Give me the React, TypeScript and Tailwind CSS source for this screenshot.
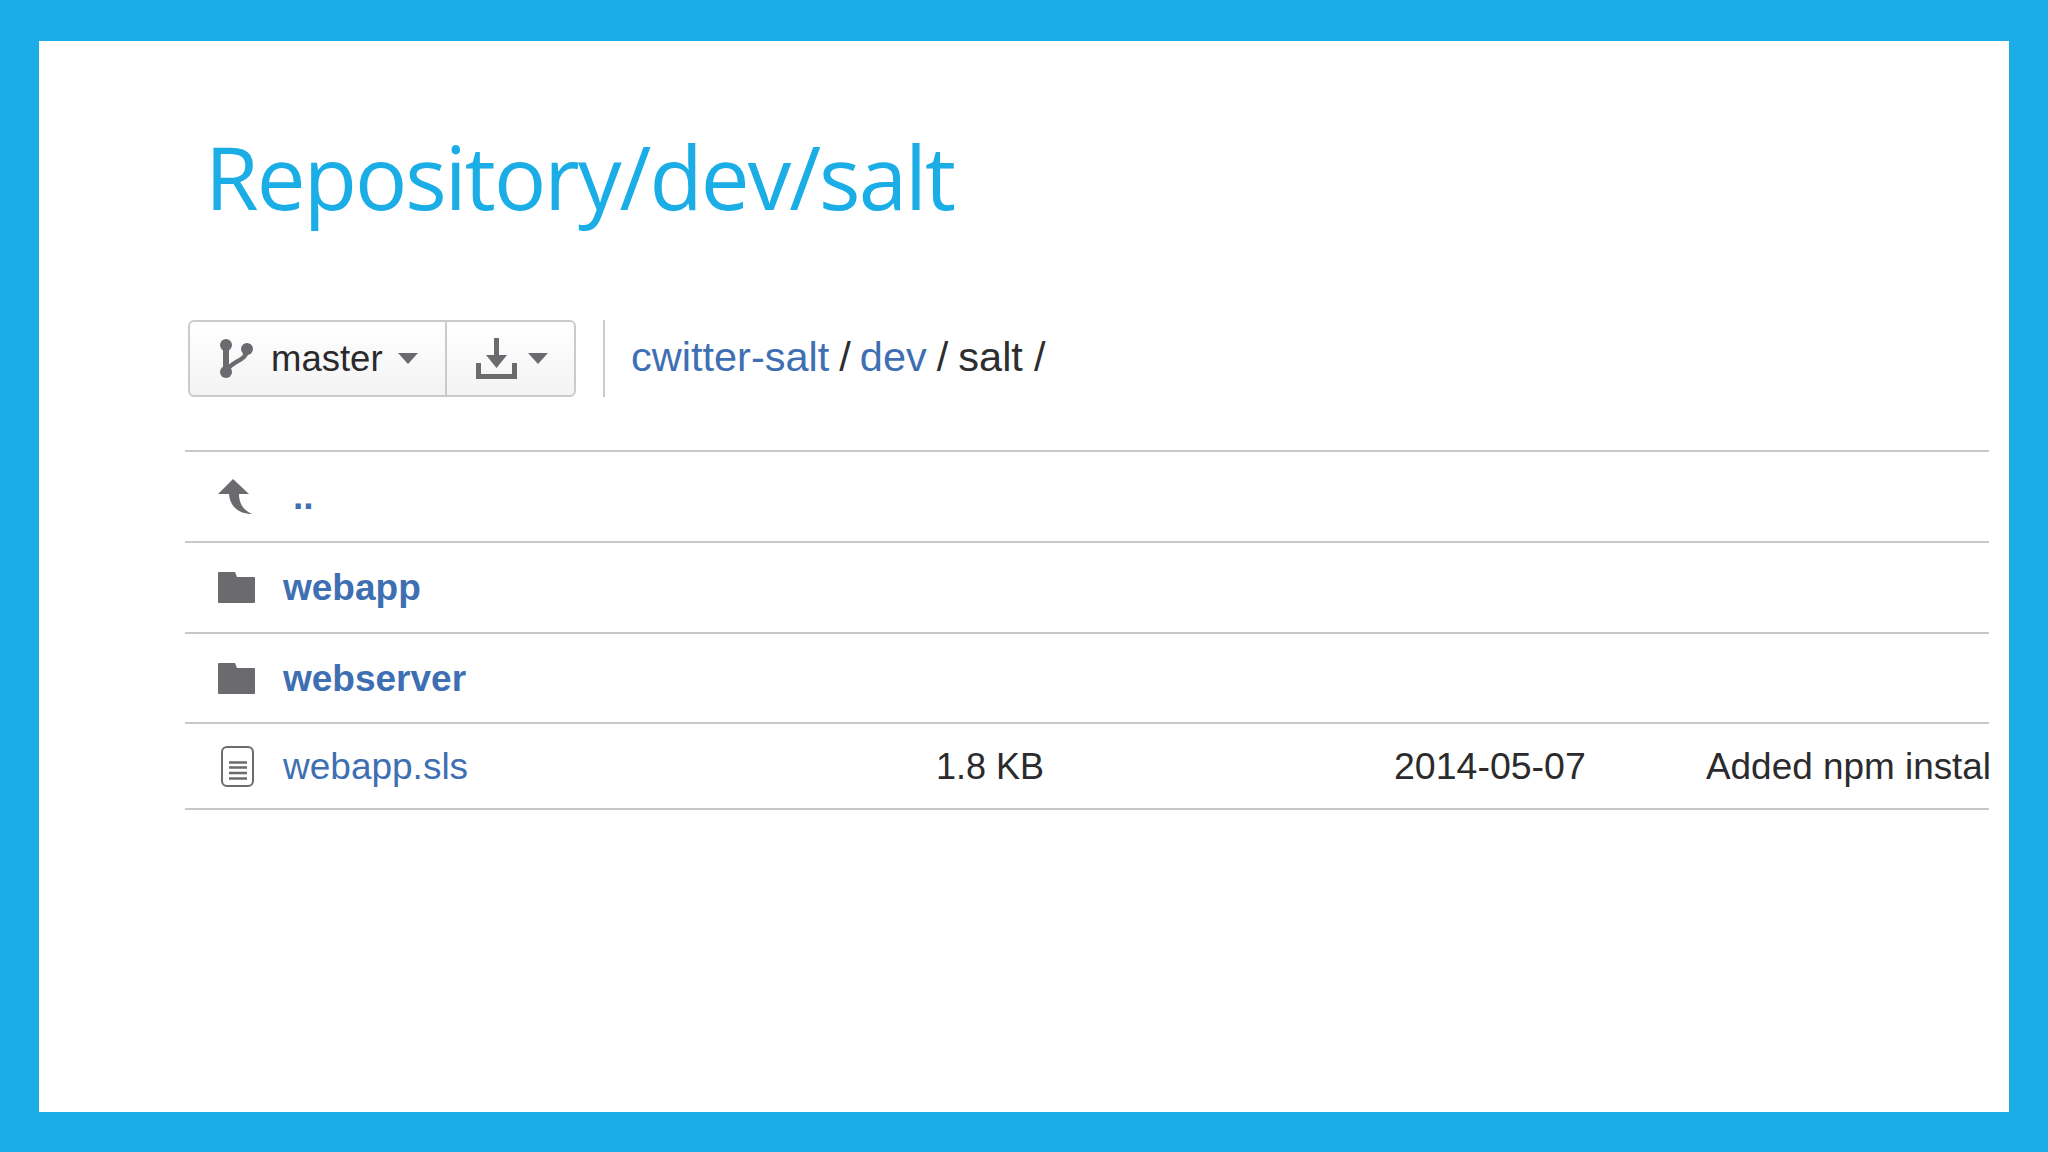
const ICON = "#6b6a6e";

function BranchIcon() {
  return (
    <svg width="34" height="39" viewBox="0 0 34 39" fill="none">
      <circle cx="7" cy="6" r="6" fill={ICON} />
      <circle cx="7" cy="33" r="6" fill={ICON} />
      <circle cx="28" cy="10" r="6" fill={ICON} />
      <path d="M7 6V33" stroke={ICON} strokeWidth="6" />
      <path d="M28 10C28 22 14 21 8 31" stroke={ICON} strokeWidth="4.5" />
    </svg>
  );
}

function DownloadIcon() {
  return (
    <svg width="41" height="41" viewBox="0 0 41 41" fill="none">
      <path d="M18 0H23V17H31L20.5 30L10 17H18Z" fill={ICON} />
      <path d="M2.5 25V38.5H38.5V25" stroke={ICON} strokeWidth="5" />
    </svg>
  );
}

function Caret() {
  return (
    <svg width="20" height="11" viewBox="0 0 20 11">
      <path d="M0 0H20L10 11Z" fill={ICON} />
    </svg>
  );
}

function UpIcon() {
  return (
    <svg width="34" height="35" viewBox="0 0 34 35">
      <path d="M15 0L31 15H21C21 24 25 31 34 35C20 35 12 27 11 15H0Z" fill={ICON} />
    </svg>
  );
}

function FolderIcon() {
  return (
    <svg width="37" height="31" viewBox="0 0 37 31">
      <path d="M1 0H17L19 5H36A1 1 0 0 1 37 6V30A1 1 0 0 1 36 31H1A1 1 0 0 1 0 30V1A1 1 0 0 1 1 0Z" fill={ICON} />
    </svg>
  );
}

function FileIcon() {
  return (
    <svg width="33" height="41" viewBox="0 0 33 41" fill="none">
      <rect x="1" y="1" width="31" height="39" rx="5" stroke={ICON} strokeWidth="2" />
      <path d="M8 16.5H26M8 21.5H26M8 27H26M8 32.5H26" stroke={ICON} strokeWidth="2.5" />
    </svg>
  );
}

function FolderRow({ name, height }: { name: string; height: string }) {
  return (
    <div className={`flex items-center border-b-2 border-[#c9c7cb] ${height}`}>
      <div className="w-[98px] pl-[33px] flex items-center shrink-0">
        <FolderIcon />
      </div>
      <span className="text-[37px] text-[#3f6fb3] font-bold pt-[1px]">{name}</span>
    </div>
  );
}

export default function App() {
  return (
    <div className="w-[2048px] h-[1152px] bg-[#1bade6] pt-[41px] pb-[40px] px-[39px] font-['Liberation_Sans',Arial,sans-serif]">
      <div className="h-full bg-white pl-[146px] pr-[20px] pt-[85px]">
        <h1 className="ml-[20px] text-[87px] leading-[100px] text-[#1bade6] font-['Open_Sans',sans-serif] tracking-[-1.95px] whitespace-nowrap">
          Repository/dev/salt
        </h1>

        <div className="mt-[94px] flex items-stretch h-[77px]">
          <div className="ml-[3px] w-[388px] flex rounded-[6px] border-2 border-[#cbcbcd] bg-gradient-to-b from-white to-[#f3f3f4]">
            <div className="w-[257px] flex items-center pl-[29px] border-r-2 border-[#cbcbcd] text-[#2a2a2c] text-[36.5px]">
              <BranchIcon />
              <span className="ml-[18px] mr-[15px] pt-[2px]">master</span>
              <Caret />
            </div>
            <div className="flex-1 flex items-center pl-[29px]">
              <DownloadIcon />
              <span className="ml-[11px]">
                <Caret />
              </span>
            </div>
          </div>
          <div className="ml-[27px] w-[2px] bg-[#cbcbcd]" />
          <div className="ml-[26px] flex items-center text-[41.5px] whitespace-nowrap pb-[2px]">
            <span className="text-[#3f6fb3]">cwitter-salt</span>
            <span className="text-[#2e2e30] ml-[10px]">/</span>
            <span className="text-[#3f6fb3] ml-[9px]">dev</span>
            <span className="text-[#2e2e30] ml-[10px]">/</span>
            <span className="text-[#2e2e30] ml-[10px]">salt</span>
            <span className="text-[#2e2e30] ml-[11px]">/</span>
          </div>
        </div>

        <div className="mt-[53px] border-t-2 border-[#c9c7cb]">
          <div className="flex items-center border-b-2 border-[#c9c7cb] h-[91px]">
            <div className="w-[108px] pl-[33px] shrink-0">
              <UpIcon />
            </div>
            <span className="text-[#3f6fb3] text-[37px] font-bold">..</span>
          </div>
          <FolderRow name="webapp" height="h-[91px]" />
          <FolderRow name="webserver" height="h-[90px]" />
          <div className="flex items-center border-b-2 border-[#c9c7cb] h-[86px] overflow-hidden whitespace-nowrap">
            <div className="w-[98px] pl-[36px] shrink-0">
              <FileIcon />
            </div>
            <span className="w-[653px] shrink-0 text-[37px] text-[#3f6fb3] pt-[1px]">webapp.sls</span>
            <span className="w-[458px] shrink-0 text-[36px] text-[#2b2b2d] pt-[1px]">1.8 KB</span>
            <span className="w-[312px] shrink-0 text-[37.5px] text-[#2b2b2d] pt-[1px]">2014-05-07</span>
            <span className="text-[36.9px] text-[#2b2b2d] pt-[1px]">Added npm install</span>
          </div>
        </div>
      </div>
    </div>
  );
}
